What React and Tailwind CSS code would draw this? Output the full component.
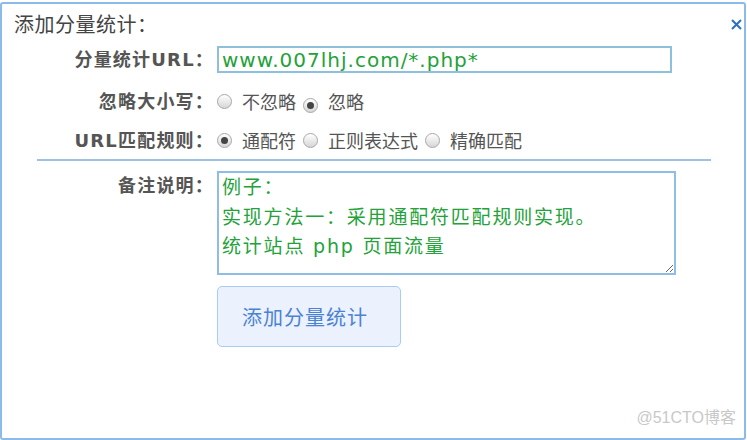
import React from "react";

function Radio({ checked }) {
  return (
    <span className="inline-flex w-[15px] h-[15px] rounded-full border border-[#a8a8a8] bg-[linear-gradient(#ffffff,#d6d6d6)] items-center justify-center shrink-0">
      {checked && <span className="w-[7px] h-[7px] rounded-full bg-[#444]" />}
    </span>
  );
}

export default function App() {
  const font = "font-['DejaVu_Sans','Noto_Sans_CJK_SC',sans-serif]";
  const cjk = "font-['Noto_Sans_CJK_SC',sans-serif]";
  const label = `w-[212px] shrink-0 text-right text-[18px] tracking-[1.2px] font-bold text-[#555] ${font}`;
  return (
    <div className={`w-[747px] h-[440px] bg-white pt-[2px] ${cjk}`}>
      <div className="relative w-[746px] h-[438px] border-2 border-[#8dbbe9] rounded-[3px] bg-white">
        <div className="flex items-start justify-between pl-[12px] pr-[2px] pt-[7px]">
          <div className="text-[20px] tracking-[0.5px] leading-[26px] text-[#444]">添加分量统计：</div>
          <svg width="11" height="11" viewBox="0 0 11 11" className="mt-[8px]">
            <path d="M1 1 L10 10 M10 1 L1 10" stroke="#2f6fc2" strokeWidth="2" />
          </svg>
        </div>

        <div className="flex items-center mt-[9px] h-[27px]">
          <div className={label}>分量统计URL：</div>
          <input
            readOnly
            defaultValue="www.007lhj.com/*.php*"
            className={`ml-[3px] w-[455px] h-[27px] border-2 border-[#8ec0dc] px-[3px] text-[20px] tracking-[1px] text-[#23a23a] outline-none ${font}`}
          />
        </div>

        <div className="flex items-center mt-[15px] h-[26px] text-[18px] text-[#555]">
          <div className={label}>忽略大小写：</div>
          <div className="ml-[3px] flex items-center">
            <Radio />
            <span className="ml-[10px]">不忽略</span>
            <span className="ml-[7px]"><Radio checked /></span>
            <span className="ml-[10px]">忽略</span>
          </div>
        </div>

        <div className="flex items-center mt-[13px] h-[26px] text-[18px] text-[#555]">
          <div className={label}>URL匹配规则：</div>
          <div className="ml-[3px] flex items-center">
            <Radio checked />
            <span className="ml-[10px]">通配符</span>
            <span className="ml-[7px]"><Radio /></span>
            <span className="ml-[10px]">正则表达式</span>
            <span className="ml-[7px]"><Radio /></span>
            <span className="ml-[10px]">精确匹配</span>
          </div>
        </div>

        <div className="ml-[35px] w-[674px] h-[2px] bg-[#9dc1e3] mt-[6px]" />

        <div className="flex items-start mt-[10px]">
          <div className={`${label} mt-[2px] leading-[26px]`}>备注说明：</div>
          <textarea
            readOnly
            defaultValue={"例子：\n实现方法一：采用通配符匹配规则实现。\n统计站点 php 页面流量"}
            className={`ml-[3px] w-[459px] h-[104px] border-2 border-[#8ebde6] px-[3px] py-0 text-[19px] tracking-[1.8px] leading-[29.5px] text-[#23a23a] outline-none resize ${font}`}
          />
        </div>

        <div className="ml-[215px] mt-[11px]">
          <button className="w-[184px] h-[61px] pr-[8px] border border-[#a8ccf2] bg-[#ebf1fd] rounded-[5px] text-[20px] tracking-[1px] text-[#4a82d4]">
            添加分量统计
          </button>
        </div>

        <div className="absolute right-[8px] bottom-[8px] text-[16px] text-[#c8c8c8] font-['Liberation_Sans','Noto_Sans_CJK_SC',sans-serif]">@51CTO博客</div>
      </div>
    </div>
  );
}
